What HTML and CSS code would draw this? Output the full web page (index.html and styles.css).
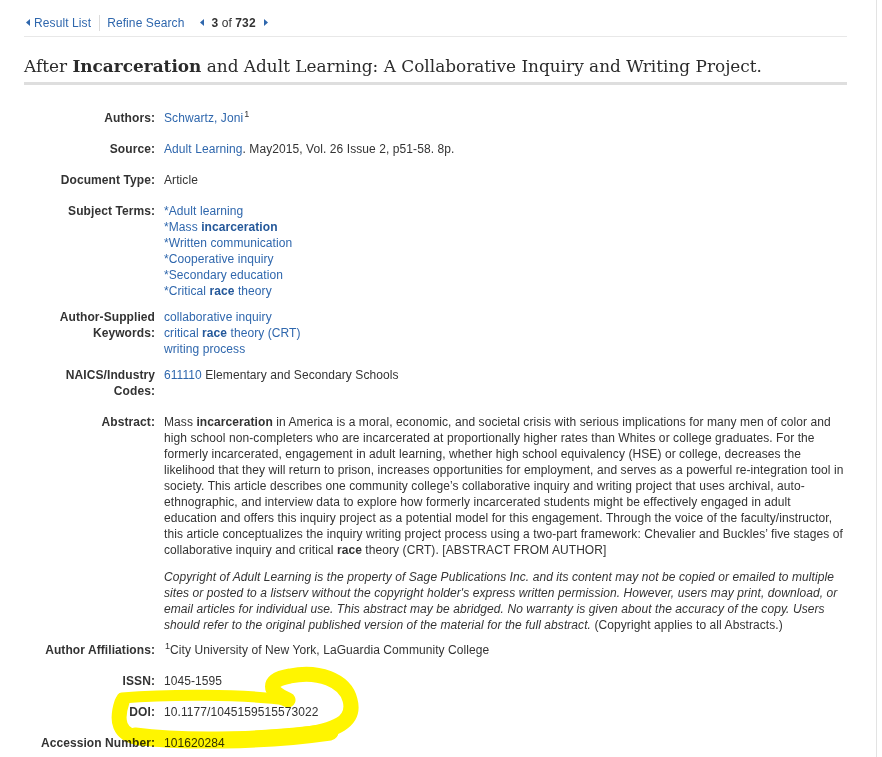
FILE: index.html
```html
<!DOCTYPE html>
<html lang="en">
<head>
<meta charset="utf-8">
<title>After Incarceration and Adult Learning</title>
<link rel="stylesheet" href="styles.css">
</head>
<body>
<div class="frame">
  <div class="content">
    <nav class="nav">
      <a class="nav-link" href="#"><svg class="tri" width="4" height="7" viewBox="0 0 4 7"><path d="M4 0 L0 3.5 L4 7 Z"/></svg>Result List</a>
      <span class="nav-sep"></span>
      <a class="nav-link" href="#">Refine Search</a>
      <span class="pager">
        <svg class="tri" width="4" height="7" viewBox="0 0 4 7"><path d="M4 0 L0 3.5 L4 7 Z"/></svg>
        <span class="count"><b>3</b> of <b>732</b></span>
        <svg class="tri" width="4" height="7" viewBox="0 0 4 7"><path d="M0 0 L4 3.5 L0 7 Z"/></svg>
      </span>
    </nav>
    <h1 class="title">After <b>Incarceration</b> and Adult Learning: A Collaborative Inquiry and Writing Project.</h1>

    <dl class="record">
      <div class="row"><dt>Authors:</dt><dd><a href="#">Schwartz, Joni</a><sup>1</sup></dd></div>
      <div class="row"><dt>Source:</dt><dd><a href="#">Adult Learning</a>. May2015, Vol. 26 Issue 2, p51-58. 8p.</dd></div>
      <div class="row"><dt>Document Type:</dt><dd>Article</dd></div>
      <div class="row tight"><dt>Subject Terms:</dt><dd>
        <a href="#">*Adult learning</a><br>
        <a href="#">*Mass <b>incarceration</b></a><br>
        <a href="#">*Written communication</a><br>
        <a href="#">*Cooperative inquiry</a><br>
        <a href="#">*Secondary education</a><br>
        <a href="#">*Critical <b>race</b> theory</a>
      </dd></div>
      <div class="row tight"><dt>Author-Supplied<br>Keywords:</dt><dd>
        <a href="#">collaborative inquiry</a><br>
        <a href="#">critical <b>race</b> theory (CRT)</a><br>
        <a href="#">writing process</a>
      </dd></div>
      <div class="row"><dt>NAICS/Industry<br>Codes:</dt><dd><a href="#">611110</a> Elementary and Secondary Schools</dd></div>
      <div class="row abstract"><dt>Abstract:</dt><dd>
        <p class="lines">Mass <b>incarceration</b> in America is a moral, economic, and societal crisis with serious implications for many men of color and<br>high school non-completers who are incarcerated at proportionally higher rates than Whites or college graduates. For the<br>formerly incarcerated, engagement in adult learning, whether high school equivalency (HSE) or college, decreases the<br>likelihood that they will return to prison, increases opportunities for employment, and serves as a powerful re-integration tool in<br>society. This article describes one community college’s collaborative inquiry and writing project that uses archival, auto-<br>ethnographic, and interview data to explore how formerly incarcerated students might be effectively engaged in adult<br>education and offers this inquiry project as a potential model for this engagement. Through the voice of the faculty/instructor,<br>this article conceptualizes the inquiry writing project process using a two-part framework: Chevalier and Buckles’ five stages of<br>collaborative inquiry and critical <b>race</b> theory (CRT). [ABSTRACT FROM AUTHOR]</p>
        <p class="lines copyright"><i>Copyright of Adult Learning is the property of Sage Publications Inc. and its content may not be copied or emailed to multiple<br>sites or posted to a listserv without the copyright holder's express written permission. However, users may print, download, or<br>email articles for individual use. This abstract may be abridged. No warranty is given about the accuracy of the copy. Users<br>should refer to the original published version of the material for the full abstract.</i> (Copyright applies to all Abstracts.)</p>
      </dd></div>
      <div class="row"><dt>Author Affiliations:</dt><dd><sup>1</sup>City University of New York, LaGuardia Community College</dd></div>
      <div class="row"><dt>ISSN:</dt><dd>1045-1595</dd></div>
      <div class="row"><dt>DOI:</dt><dd>10.1177/1045159515573022</dd></div>
      <div class="row"><dt>Accession Number:</dt><dd>101620284</dd></div>
    </dl>
  </div>
</div>
<svg class="marker" width="882" height="757" viewBox="0 0 882 757" aria-hidden="true">
  <path class="thin" d="M122 698 C 170 694, 240 694, 288 700"/>
  <path d="M288 700 C 268 692, 266 680, 290 676 C 318 670, 345 680, 350 700 C 356 722, 335 731, 300 735 C 250 740, 180 741, 140 738 C 118 735, 116 720, 122 702"/>
  <path class="thick" d="M135 736 C 180 742, 260 742, 330 732"/>
</svg>
</body>
</html>
```
FILE: styles.css
```css
html, body {
  margin: 0;
  padding: 0;
  background: #fff;
}
body {
  font-family: "Liberation Sans", Arial, sans-serif;
  font-size: 12px;
  line-height: 16px;
  color: #333;
  position: relative;
  letter-spacing: 0.08px;
}
.frame {
  width: 876px;
  min-height: 757px;
  border-right: 1px solid #e3e3e3;
}
.content {
  margin-left: 24px;
  width: 823px;
}
a {
  color: #2f67ad;
  text-decoration: none;
}
a b { color: #24589a; }
.nav {
  display: flex;
  align-items: center;
  height: 37px;
  padding-top: 9px;
  border-bottom: 1px solid #e8e8e8;
  box-sizing: border-box;
  padding-left: 2px;
  letter-spacing: 0.1px;
}
.nav-link {
  display: inline-flex;
  align-items: center;
}
.tri { fill: #2f67ad; display: block; }
.nav-link .tri { margin-right: 4px; }
.nav-sep {
  width: 1px;
  height: 16px;
  background: #dcdcdc;
  margin: 0 7px 0 8px;
}
.pager {
  display: inline-flex;
  align-items: center;
  margin-left: 16px;
}
.count { margin: 0 8px 0 7px; color: #333; }
.count b { font-weight: bold; }
.title {
  font-family: "DejaVu Serif", Georgia, serif;
  font-weight: normal;
  font-size: 16.9px;
  line-height: 24px;
  letter-spacing: 0;
  color: #2b2b2b;
  margin: 0;
  padding: 17px 0 4px 0;
  border-bottom: 3px solid #dedede;
}
.title b { font-weight: bold; }
.record {
  margin: 25px 0 0 0;
}
.row {
  display: grid;
  grid-template-columns: 131px 1fr;
  column-gap: 9px;
  margin-bottom: 15px;
}
.row.tight { margin-bottom: 10px; }
.row.abstract { margin-bottom: 9px; }
dt {
  font-weight: bold;
  text-align: right;
  margin: 0;
}
dd { margin: 0; }
dd p { margin: 0; }
dd p.lines { white-space: nowrap; }
dd p.copyright { margin-top: 11px; }
sup {
  font-size: 9px;
  line-height: 0;
  vertical-align: baseline;
  position: relative;
  top: -5px;
  margin-left: 1px;
}
.marker {
  position: absolute;
  top: 0;
  left: 0;
  pointer-events: none;
  mix-blend-mode: multiply;
}
.marker path {
  fill: none;
  stroke: #fff500;
  stroke-width: 15;
  stroke-linecap: round;
  stroke-linejoin: round;
}
.marker path.thin { stroke-width: 11; }
.marker path.thick { stroke-width: 17; }
```
